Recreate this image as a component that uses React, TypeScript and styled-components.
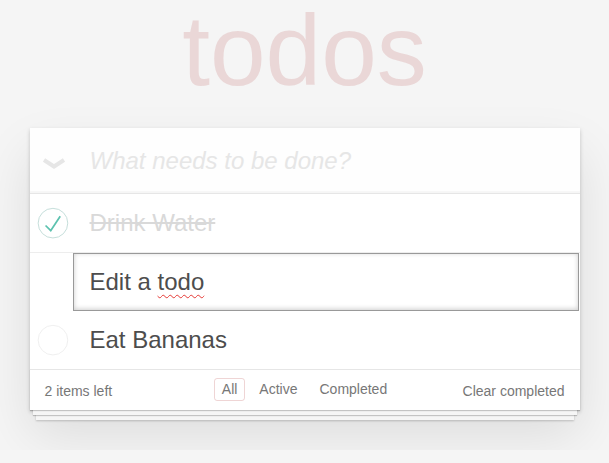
import styled, { createGlobalStyle } from "styled-components";

const GlobalStyle = createGlobalStyle`
  html, body {
    margin: 0;
    padding: 0;
  }
  body {
    font: 14px "Liberation Sans", Arial, sans-serif;
    line-height: 1.4em;
    background: #f5f5f5;
    color: #4d4d4d;
    font-weight: 300;
    -webkit-font-smoothing: antialiased;
  }
`;

type Todo = { id: number; title: string; completed?: boolean; editing?: boolean };

const todos: Todo[] = [
  { id: 1, title: "Drink Water", completed: true },
  { id: 2, title: "Edit a todo", editing: true },
  { id: 3, title: "Eat Bananas" },
];

const filters = ["All", "Active", "Completed"];

const ToggleIcon: React.FC<{ checked?: boolean }> = ({ checked }) => (
  <svg width="40" height="40" viewBox="-10 -18 100 135">
    <circle
      cx="50"
      cy="50"
      r="50"
      fill="none"
      stroke={checked ? "#bddad5" : "#ededed"}
      strokeWidth="3"
    />
    {checked && <path fill="#5dc2af" d="M72 25L42 71 27 56l-4 4 20 20 34-52z" />}
  </svg>
);

const Chevron = () => (
  <svg width="24" height="14" viewBox="0 0 24 14">
    <path
      d="M2 3 L12 9.5 L22 3"
      fill="none"
      stroke="#e6e6e6"
      strokeWidth="4"
      strokeLinejoin="miter"
    />
  </svg>
);

const App: React.FunctionComponent = () => {
  return (
    <Page>
      <GlobalStyle />
      <Title>todos</Title>
      <Card>
        <NewTodoRow>
          <ToggleAll>
            <Chevron />
          </ToggleAll>
          <NewTodoInput placeholder="What needs to be done?" />
        </NewTodoRow>
        <TodoList>
          {todos.map((todo) =>
            todo.editing ? (
              <EditRow key={todo.id}>
                <EditBox>
                  Edit a <Misspelled>todo</Misspelled>
                </EditBox>
              </EditRow>
            ) : (
              <TodoItem key={todo.id}>
                <ToggleCell>
                  <ToggleIcon checked={todo.completed} />
                </ToggleCell>
                <TodoLabel $completed={todo.completed}>{todo.title}</TodoLabel>
              </TodoItem>
            )
          )}
        </TodoList>
        <Footer>
          <TodoCount>2 items left</TodoCount>
          <Filters>
            {filters.map((f) => (
              <FilterLink key={f} $selected={f === "All"}>
                {f}
              </FilterLink>
            ))}
          </Filters>
          <ClearCompleted>Clear completed</ClearCompleted>
        </Footer>
      </Card>
    </Page>
  );
};

const Page = styled.div`
  max-width: 550px;
  min-width: 230px;
  margin: 0 auto;
  padding-bottom: 40px;
`;

const Title = styled.h1`
  margin: 0;
  height: 100px;
  font-size: 100px;
  line-height: 100px;
  font-weight: 100;
  text-align: center;
  color: rgba(175, 47, 47, 0.15);
  text-rendering: optimizeLegibility;
`;

const Card = styled.section`
  margin-top: 28px;
  background: #fff;
  box-shadow: 0 2px 4px 0 rgba(0, 0, 0, 0.2), 0 25px 50px 0 rgba(0, 0, 0, 0.1);
`;

const NewTodoRow = styled.header`
  display: flex;
  align-items: center;
  background: rgba(0, 0, 0, 0.003);
  box-shadow: inset 0 -2px 1px rgba(0, 0, 0, 0.03);
`;

const ToggleAll = styled.div`
  width: 60px;
  box-sizing: border-box;
  display: flex;
  align-items: center;
  padding: 6px 0 0 12px;
`;

const NewTodoInput = styled.input`
  flex: 1;
  min-width: 0;
  margin: 0;
  padding: 16px 16px 16px 0;
  border: none;
  background: transparent;
  font-family: inherit;
  font-size: 24px;
  line-height: 33px;
  color: inherit;
  outline: none;

  &::placeholder {
    font-style: italic;
    font-weight: 300;
    color: #e6e6e6;
  }
`;

const TodoList = styled.ul`
  margin: 0;
  padding: 0;
  list-style: none;
  border-top: 1px solid #e6e6e6;
`;

const TodoItem = styled.li`
  display: flex;
  align-items: center;
  font-size: 24px;
  border-bottom: 1px solid #ededed;

  &:last-child {
    border-bottom: none;
  }
`;

const ToggleCell = styled.div`
  width: 40px;
  height: 40px;
  flex: none;
`;

const TodoLabel = styled.label<{ $completed?: boolean }>`
  display: block;
  padding: 15px 15px 15px 20px;
  line-height: 28px;
  word-break: break-all;
  color: ${(p) => (p.$completed ? "#d9d9d9" : "#4d4d4d")};
  text-decoration: ${(p) => (p.$completed ? "line-through" : "none")};
`;

const EditRow = styled.li`
  font-size: 24px;
  padding: 0;
`;

const EditBox = styled.div`
  width: 506px;
  margin: 0 0 0 43px;
  padding: 12px 16px;
  box-sizing: border-box;
  border: 1px solid #999;
  box-shadow: inset 0 -1px 5px 0 rgba(0, 0, 0, 0.2);
  font-size: 24px;
  line-height: 32px;
  color: #4d4d4d;
`;

const Misspelled = styled.span`
  text-decoration: underline wavy #e53935;
  text-decoration-thickness: 1px;
  text-underline-offset: 4px;
`;

const Footer = styled.footer`
  display: grid;
  grid-template-columns: 1fr auto 1fr;
  align-items: center;
  height: 20px;
  padding: 10px 15px;
  color: #777;
  border-top: 1px solid #e6e6e6;
  box-shadow: 0 1px 1px rgba(0, 0, 0, 0.2), 0 8px 0 -3px #f6f6f6,
    0 9px 1px -3px rgba(0, 0, 0, 0.2), 0 16px 0 -6px #f6f6f6,
    0 17px 2px -6px rgba(0, 0, 0, 0.2);
`;

const TodoCount = styled.span`
  text-align: left;
  line-height: 20px;
`;

const Filters = styled.ul`
  display: flex;
  gap: 6px;
  margin: -2px 0 0;
  padding: 0;
  list-style: none;
`;

const FilterLink = styled.li<{ $selected?: boolean }>`
  padding: 3px 7px;
  line-height: 15px;
  border: 1px solid ${(p) => (p.$selected ? "rgba(175, 47, 47, 0.2)" : "transparent")};
  border-radius: 3px;
  cursor: pointer;
`;

const ClearCompleted = styled.span`
  justify-self: end;
  line-height: 20px;
  cursor: pointer;
`;

export default App;
